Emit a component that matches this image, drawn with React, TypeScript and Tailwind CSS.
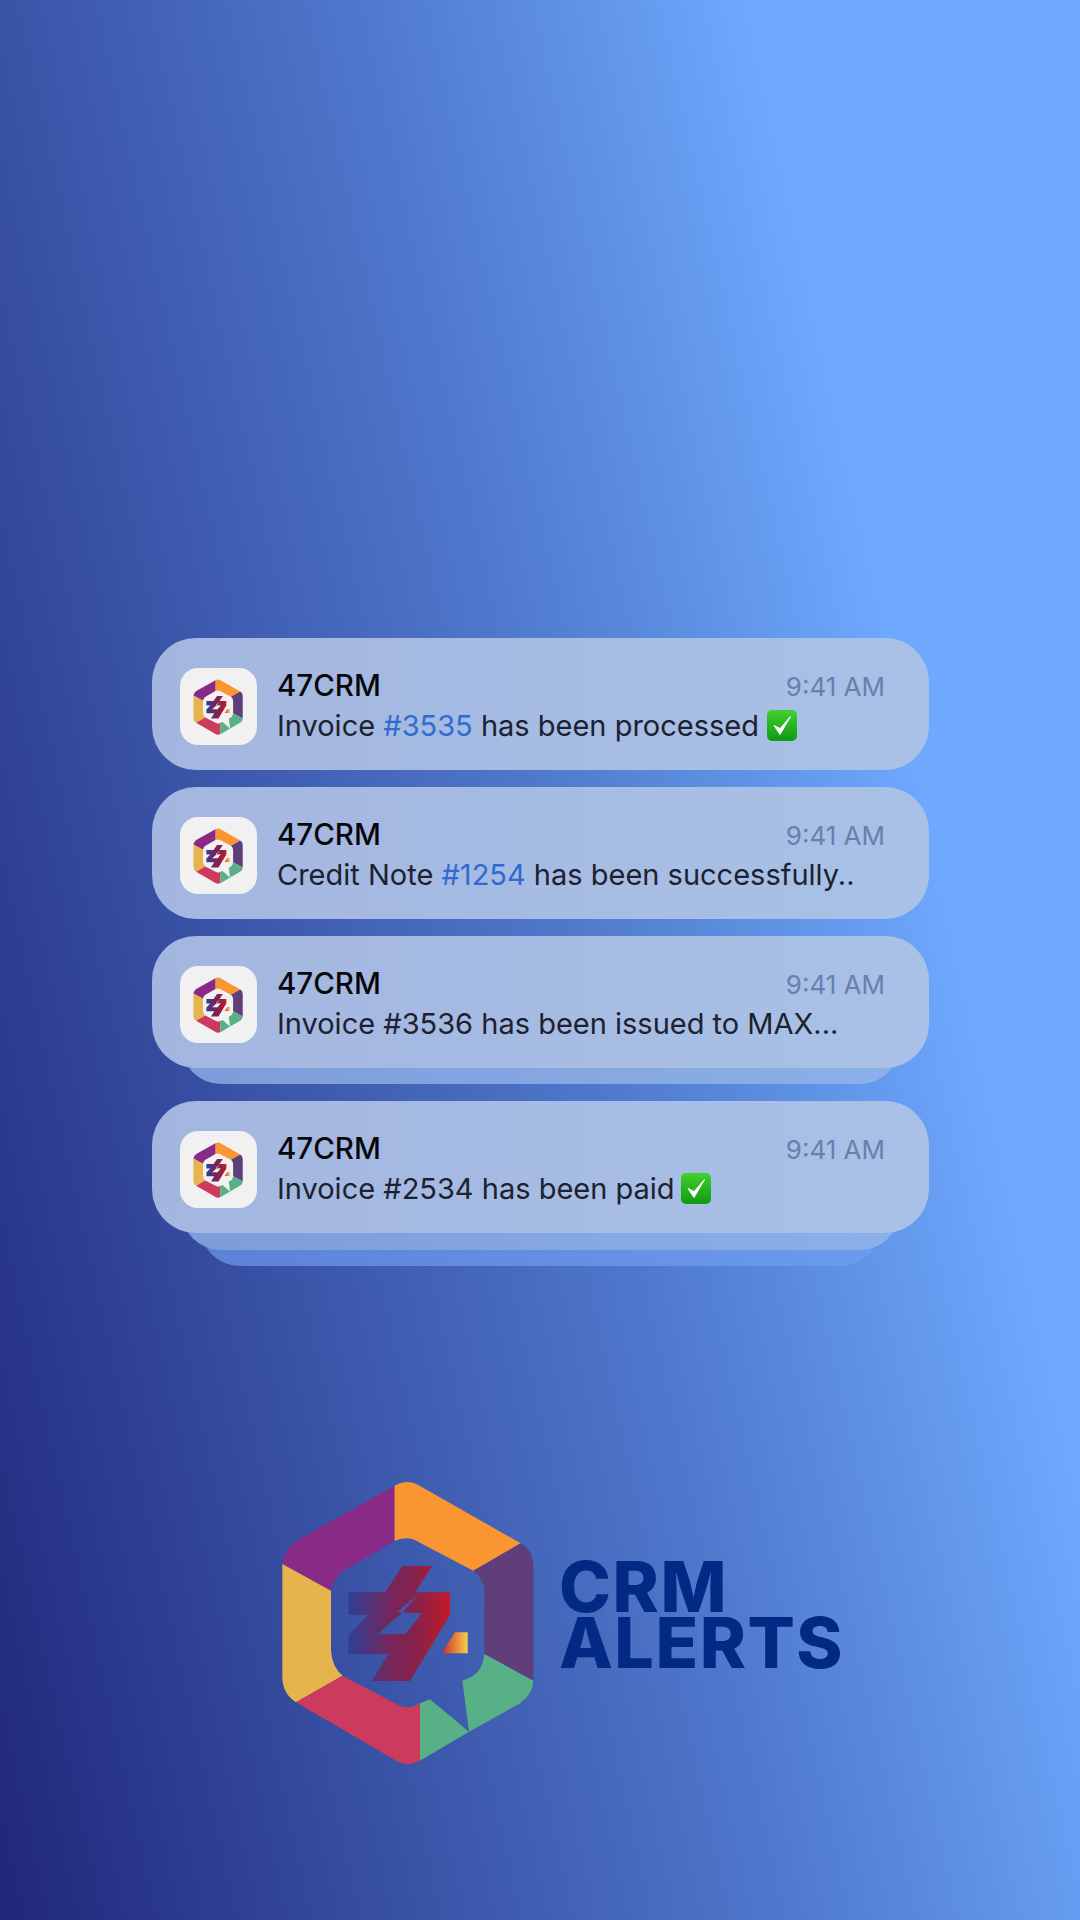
import { useId } from 'react';

function Logo({ className }: { className: string }) {
  const id = useId();
  return (
    <svg viewBox="0 0 840 900" className={className}>
      <defs>
        <linearGradient id={`${id}-mark`} gradientUnits="userSpaceOnUse" x1="235" y1="0" x2="540" y2="0">
          <stop offset="0" stopColor="#2e3f95" />
          <stop offset="0.45" stopColor="#7b2458" />
          <stop offset="0.65" stopColor="#84224c" />
          <stop offset="1" stopColor="#c41a2a" />
        </linearGradient>
        <linearGradient id={`${id}-dot`} gradientUnits="userSpaceOnUse" x1="515" y1="0" x2="593" y2="0">
          <stop offset="0" stopColor="#cf2a2a" />
          <stop offset="1" stopColor="#f5cf4a" />
        </linearGradient>
      </defs>
      <path fill="#f99632" d="M373 48Q412 24 450 48L752 220L610 302L450 218Q412 194 373 213Z" />
      <path fill="#8a2a87" d="M373 48L373 213L215 305Q190 325 183 362L37 282Q45 235 80 212Z" />
      <path fill="#5f3e7b" d="M752 220Q790 240 790 290L790 632L643 552L643 360Q640 325 610 302Z" />
      <path fill="#e6b44d" d="M37 282L183 362L183 540Q185 590 218 617L78 697Q37 670 37 620Z" />
      <path fill="#cc3a5e" d="M78 697L218 617L375 700Q412 724 450 700L450 870Q412 894 375 870Z" />
      <path fill="#58b087" d="M450 700L480 688L597 785L450 872Z" />
      <path fill="#58b087" d="M643 552L790 632Q790 670 750 700L597 785L577 632L605 620Q640 600 643 552Z" />
      <path
        fill={`url(#${id}-mark)`}
        fillRule="evenodd"
        d="M398 288L487 288L435 367L540 367L540 435L420 633L305 633L355 552L235 552L235 495L295 435L235 435L235 367L345 367ZM445 373L380 427L455 430L407 492L323 492L400 425Z"
      />
      <path fill={`url(#${id}-dot)`} d="M515 550L555 487L593 487L593 550Z" />
    </svg>
  );
}

function CheckEmoji({ className = '' }: { className?: string }) {
  const id = useId();
  return (
    <svg viewBox="0 0 30 31" className={`inline-block h-[31px] w-[30px] align-[-5px] ${className}`}>
      <defs>
        <linearGradient id={id} x1="0" y1="0" x2="0" y2="1">
          <stop offset="0" stopColor="#44d02f" />
          <stop offset="1" stopColor="#0e9a12" />
        </linearGradient>
      </defs>
      <rect width="30" height="31" rx="5" fill={`url(#${id})`} />
      <path d="M7 15.5L13 24.5L23.5 6.5L13.2 18.5Z" fill="#fff" stroke="#fff" strokeWidth="1" strokeLinejoin="round" />
    </svg>
  );
}

function Hash({ children }: { children: string }) {
  return <span className="text-[#2f6bd0]">{children}</span>;
}

function Notification({ children }: { children: React.ReactNode }) {
  return (
    <div className="relative z-10 flex h-[132px] items-center gap-[20px] rounded-[44px] bg-gradient-to-r from-[#a3b6df] to-[#a9c1e7] pl-[28px] pr-[44px]">
      <div className="mt-[4px] flex h-[77px] w-[77px] shrink-0 items-center justify-center rounded-[18px] bg-[#f1f1f1]">
        <Logo className="h-[59px] w-[55px]" />
      </div>
      <div className="flex-1 pt-[2px]">
        <div className="flex h-[39px] items-center justify-between">
          <span className="text-[29.5px] font-[550] text-[#08080c]">47CRM</span>
          <span className="pt-[2px] text-[26px] text-[#6681ad]">9:41 AM</span>
        </div>
        <div className="mt-[1px] h-[39px] whitespace-nowrap text-[29px] leading-[39px] text-[#1c2230]">{children}</div>
      </div>
    </div>
  );
}

export default function App() {
  return (
    <div className="h-[1920px] w-[1080px] overflow-hidden bg-[linear-gradient(77.5deg,#20277a_0%,#4f78cc_52%,#5f92e4_66%,#6ea8ff_78%,#6ea8ff_100%)] pt-[638px] font-['Inter',sans-serif]">
      <div className="mx-[152px] flex w-[777px] flex-col">
        <Notification>
          Invoice <Hash>#3535</Hash> has been processed <CheckEmoji />
        </Notification>
        <div className="h-[17px]" />
        <Notification>
          Credit Note <Hash>#1254</Hash> has been successfully..
        </Notification>
        <div className="h-[17px]" />
        <Notification>Invoice #3536 has been issued to MAX...</Notification>
        <div className="z-[5] mx-[29px] -mt-[40px] h-[56px] rounded-b-[40px] bg-gradient-to-r from-[#7d9cd9] to-[#8cb0ea]" />
        <div className="h-[17px]" />
        <Notification>
          Invoice #2534 has been paid <CheckEmoji className="-ml-[2px]" />
        </Notification>
        <div className="z-[5] mx-[29px] -mt-[40px] h-[57px] rounded-b-[40px] bg-gradient-to-r from-[#7d9cd9] to-[#8cb0ea]" />
        <div className="mx-[48px] -mt-[40px] h-[56px] rounded-b-[40px] bg-gradient-to-r from-[#5c82d6] to-[#6c9cec]" />
      </div>
      <div className="mt-[204px] flex pl-[270px]">
        <Logo className="h-[300px] w-[280px] shrink-0" />
        <div className="ml-[9px] mt-[89px] text-[70px] font-extrabold leading-[56px] tracking-[1.5px] text-[#022a84]">
          <div>CRM</div>
          <div>ALERTS</div>
        </div>
      </div>
    </div>
  );
}
